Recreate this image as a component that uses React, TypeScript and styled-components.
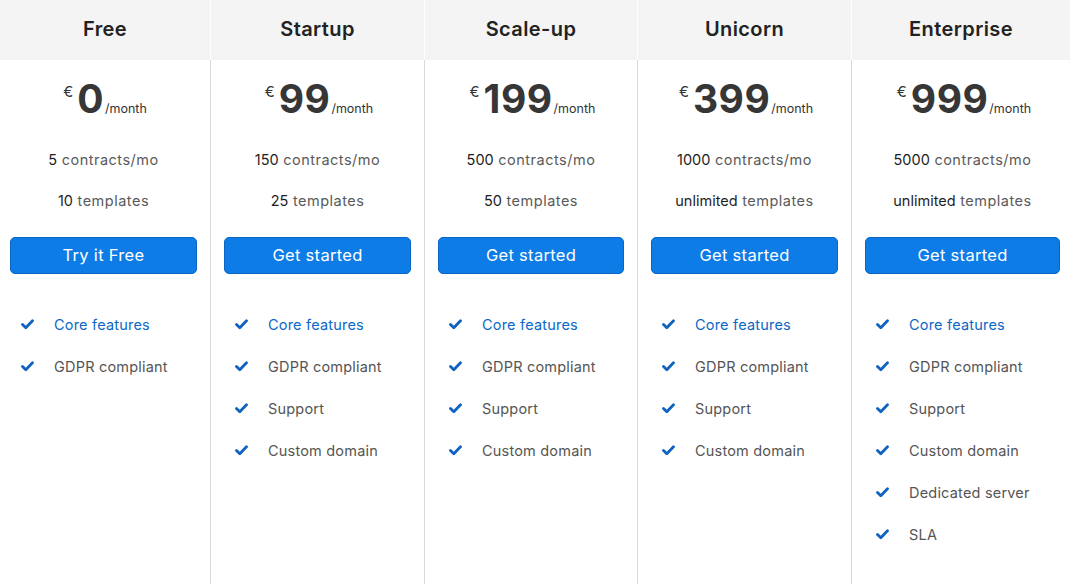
import React from "react";
import styled, { createGlobalStyle } from "styled-components";

const Global = createGlobalStyle`
  html, body { margin: 0; padding: 0; background: #fff; }
  body { font-family: Inter, "Noto Sans", "Liberation Sans", sans-serif; -webkit-font-smoothing: antialiased; }
  * { box-sizing: border-box; }
`;

type Plan = {
  name: string;
  price: string;
  contracts: string;
  templates: string;
  cta: string;
  features: string[];
};

const plans: Plan[] = [
  { name: "Free", price: "0", contracts: "5", templates: "10", cta: "Try it Free", features: ["Core features", "GDPR compliant"] },
  { name: "Startup", price: "99", contracts: "150", templates: "25", cta: "Get started", features: ["Core features", "GDPR compliant", "Support", "Custom domain"] },
  { name: "Scale-up", price: "199", contracts: "500", templates: "50", cta: "Get started", features: ["Core features", "GDPR compliant", "Support", "Custom domain"] },
  { name: "Unicorn", price: "399", contracts: "1000", templates: "unlimited", cta: "Get started", features: ["Core features", "GDPR compliant", "Support", "Custom domain"] },
  { name: "Enterprise", price: "999", contracts: "5000", templates: "unlimited", cta: "Get started", features: ["Core features", "GDPR compliant", "Support", "Custom domain", "Dedicated server", "SLA"] },
];

const Table = styled.div`
  display: grid;
  grid-template-columns: 211px 214px 213px 214px 1fr;
  width: 1070px;
  height: 584px;
  overflow: hidden;
`;

const Column = styled.div`
  display: flex;
  flex-direction: column;
  min-width: 0;
`;

const Header = styled.div<{ $last?: boolean }>`
  height: 60px;
  background: #f4f4f4;
  border-right: ${(p) => (p.$last ? "none" : "1px solid #ffffff")};
  display: flex;
  align-items: center;
  justify-content: center;
  padding-bottom: 2px;
  font-size: 20px;
  font-weight: 600;
  letter-spacing: 0.4px;
  color: #222;
`;

const Body = styled.div<{ $first?: boolean; $last?: boolean }>`
  flex: 1;
  border-right: ${(p) => (p.$last ? "none" : "1px solid #d9d9d9")};
  display: flex;
  flex-direction: column;
  align-items: stretch;
  padding: 19px ${(p) => (p.$last ? 10 : 13)}px 0 ${(p) => (p.$first ? 10 : 13)}px;
`;

const PriceRow = styled.div`
  display: flex;
  justify-content: center;
  align-items: flex-start;
  height: 39px;
  padding-left: 3px;
  color: #333;
`;

const Currency = styled.span`
  font-size: 15px;
  line-height: 15px;
  margin-top: 5px;
  margin-right: 4px;
  color: #333;
`;

const Amount = styled.span`
  font-size: 39px;
  line-height: 39px;
  font-weight: 700;
  letter-spacing: 0.5px;
  color: #363636;
`;

const Per = styled.span`
  font-size: 12.5px;
  line-height: 13px;
  margin-top: 23px;
  margin-left: 1px;
  color: #333;
`;

const Line = styled.div<{ $gap: number }>`
  margin-top: ${(p) => p.$gap}px;
  height: 20px;
  line-height: 20px;
  text-align: center;
  font-size: 14.5px;
  color: #5a5a5a;
  letter-spacing: 0.5px;
  b { font-weight: 400; color: #1e1e1e; letter-spacing: 0; }
`;

const Button = styled.button`
  margin-top: 26px;
  height: 37px;
  width: 100%;
  border: 1px solid #0a66c2;
  border-radius: 5px;
  background: #0d7ce6;
  color: #fff;
  font-family: inherit;
  font-size: 16.5px;
  letter-spacing: 0.3px;
  padding: 0 0 2px 0;
  cursor: pointer;
`;

const Features = styled.ul<{ $first?: boolean }>`
  list-style: none;
  margin: 29px 0 0 0;
  padding: 0 0 0 ${(p) => (p.$first ? 11 : 11)}px;
`;

const Feature = styled.li<{ $accent?: boolean }>`
  height: 42px;
  display: flex;
  align-items: center;
  gap: 20px;
  font-size: 14.5px;
  letter-spacing: 0.2px;
  color: ${(p) => (p.$accent ? "#0b68c8" : "#555")};
`;

const Check = () => (
  <svg width="13" height="11" viewBox="0 0 13 11" aria-hidden="true">
    <polyline points="1.5,5.5 4.8,8.8 11.5,1.8" fill="none" stroke="#0f62c0" strokeWidth="2.8" strokeLinecap="round" strokeLinejoin="round" />
  </svg>
);

export default function App() {
  return (
    <>
      <Global />
      <Table>
        {plans.map((p, i) => {
          const first = i === 0;
          const last = i === plans.length - 1;
          return (
            <Column key={p.name}>
              <Header $last={last}>{p.name}</Header>
              <Body $first={first} $last={last}>
                <PriceRow>
                  <Currency>€</Currency>
                  <Amount>{p.price}</Amount>
                  <Per>/month</Per>
                </PriceRow>
                <Line $gap={32}>
                  <b>{p.contracts}</b> contracts/mo
                </Line>
                <Line $gap={21}>
                  <b>{p.templates}</b> templates
                </Line>
                <Button>{p.cta}</Button>
                <Features $first={first}>
                  {p.features.map((f, j) => (
                    <Feature key={f} $accent={j === 0}>
                      <Check />
                      <span>{f}</span>
                    </Feature>
                  ))}
                </Features>
              </Body>
            </Column>
          );
        })}
      </Table>
    </>
  );
}
